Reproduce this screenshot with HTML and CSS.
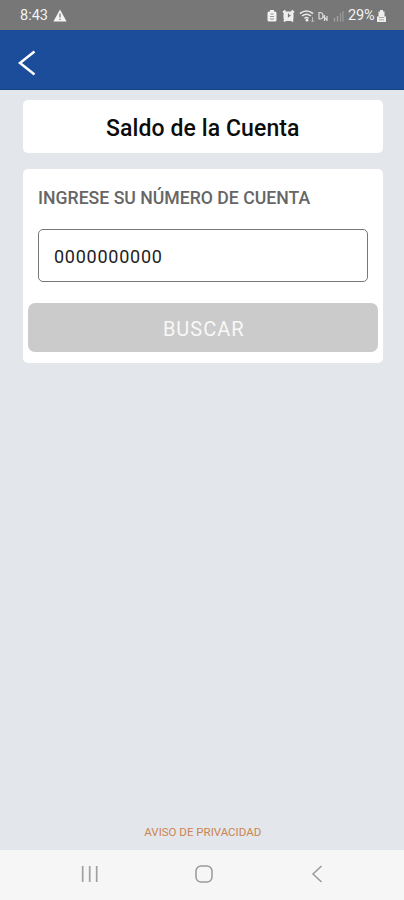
FILE: index.html
```
<!DOCTYPE html>
<html lang="es">
<head>
<meta charset="utf-8">
<title>Saldo de la Cuenta</title>
<link rel="stylesheet" href="styles.css">
</head>
<body>
<div class="status">
  <span class="time">8:43</span>
  <svg class="warning" width="14" height="13" viewBox="0 0 14 13"><path d="M7 .5 13.6 12.5H.4Z" fill="#f4f4f4"/><path d="M7 4.5v4M7 9.8v1.3" stroke="#777" stroke-width="1.3"/></svg>
  <svg class="indicators" width="80" height="16" viewBox="0 0 80 16">
    <path d="M4 2h4v1.500h1q1.500 0 1.500 1.500v7q0 1.500-1.500 1.500H3Q1.500 13.500 1.500 12V5q0-1.500 1.500-1.500h1Z" fill="#f1f1f1"/>
    <path d="M4.500 6h3M4 8.500h4M4 11h4" stroke="#999"/>
    <path d="m17 4.500 2.500-2M28 4.500l-2.500-2M18 13.500l1.500-1.500M27 13.500 25.500 12" stroke="#eee" stroke-width="2"/>
    <rect x="17.500" y="3.500" width="10" height="9.500" rx="3" fill="#eee"/>
    <path d="M22.500 5.500v3l2-1.500" fill="none" stroke="#777" stroke-width="1.200"/>
    <path d="M34 5.500q6.500-5 13 0M36 8q4.500-3.600 9 0M38.500 10.300q2-1.500 4 0" fill="none" stroke="#e9e9e9" stroke-width="1.600"/>
    <circle cx="41" cy="12.200" r="1.400" fill="#eee"/>
    <path d="M46.500 9v5M45 12.500l1.500 1.500 1.500-1.500" fill="none" stroke="#bbb"/>
    <path d="M53 4.500V11h1q3 0 3-3.200T54 4.500ZM58.500 7v6M61 8v5M57.500 8.500 61 12" fill="none" stroke="#ddd" stroke-width="1.200"/>
    <path d="M68.500 10v3.500M71.500 8v5.500" stroke="#a5a5a5" stroke-width="1.300"/>
    <path d="M74.500 5v8.500M77 3v10.500" stroke="#999" stroke-width="1.300"/>
  </svg>
  <span class="percent">29%</span>
  <svg class="battery" width="9" height="14" viewBox="0 0 9 14"><path d="M3 1h3v1.500h1.500v5H9v5.500H0V7.500h1.500v-5H3Z" fill="#ededed"/><path d="M2 8.500h5M2 10.800h5" stroke="#aaa"/></svg>
</div>
<header class="bar">
  <svg width="18" height="26" viewBox="0 0 18 26"><path d="M16.500 1.500 2 13l14.500 11.500" fill="none" stroke="#fff" stroke-width="2.500"/></svg>
</header>
<main>
  <h1 class="card"><span>Saldo de la Cuenta</span></h1>
  <form class="card form">
    <label for="account">INGRESE SU NÚMERO DE CUENTA</label>
    <input id="account" type="text" value="0000000000">
    <button type="button">BUSCAR</button>
  </form>
  <a class="privacy">AVISO DE PRIVACIDAD</a>
</main>
<nav>
  <svg width="18" height="18" viewBox="0 0 18 18"><path d="M1.700 1v16M8.700 1v16M15.700 1v16" stroke="#a0a0a0" stroke-width="1.700"/></svg>
  <svg class="home" width="18" height="18" viewBox="0 0 18 18"><rect x="1" y="1" width="16" height="16" rx="5" fill="none" stroke="#999" stroke-width="1.500"/></svg>
  <svg width="12" height="18" viewBox="0 0 12 18"><path d="M10.500 1 2 9l8.500 8" fill="none" stroke="#999" stroke-width="1.500"/></svg>
</nav>
</body>
</html>
```
FILE: styles.css
```
* { box-sizing: border-box; }
body {
  margin: 0;
  height: 900px;
  display: flex;
  flex-direction: column;
  background: #e3e7eb;
  font-family: Roboto, sans-serif;
}
svg { display: block; flex: none; }
.status {
  height: 30px;
  flex: none;
  display: flex;
  align-items: center;
  padding: 1px 18px 0 20px;
  background: #777;
  color: #f2f2f2;
  font-size: 14.500px;
}
.time { width: 28px; }
.warning { margin-left: 5px; }
.indicators { margin-left: auto; }
.percent { width: 27px; margin-left: 2px; letter-spacing: -.2px; white-space: nowrap; }
.battery { margin-left: 2px; }
.bar {
  height: 60px;
  flex: none;
  display: flex;
  align-items: center;
  padding: 6px 0 0 18px;
  background: #1b4d9a;
  border-bottom: 1px solid #134688;
}
main {
  flex: 1;
  display: flex;
  flex-direction: column;
  padding: 10px 21px 11px 22.500px;
}
.card { background: #fff; border-radius: 5px; }
h1 {
  height: 53px;
  margin: 0 0 16px;
  display: flex;
  align-items: center;
  justify-content: center;
  padding-top: 4px;
  color: #0c0c0c;
  font-size: 23px;
  font-weight: 500;
  letter-spacing: .1px;
}
.form {
  height: 194px;
  display: flex;
  flex-direction: column;
  padding: 17px 5.500px 0;
}
label {
  height: 24px;
  margin: 0 10px 19px;
  line-height: 24px;
  color: #666;
  font-size: 17.650px;
  font-weight: 500;
  white-space: nowrap;
}
input {
  height: 53px;
  margin: 0 10px 21px;
  padding: 1px 15px 0;
  border: 1px solid #777;
  border-radius: 5px;
  background: #fff;
  color: #222;
  font: 400 18px Roboto, sans-serif;
  letter-spacing: .75px;
}
button {
  height: 49px;
  padding: 2px 0 0 2px;
  border: 0;
  border-radius: 7px;
  background: #cbcbcb;
  color: #f8f8f8;
  font: 400 20px Roboto, sans-serif;
  letter-spacing: 1px;
}
.privacy {
  margin-top: auto;
  align-self: center;
  color: #cb8352;
  font-size: 11.500px;
  line-height: 14px;
}
nav {
  height: 50px;
  flex: none;
  display: flex;
  align-items: center;
  justify-content: space-between;
  padding: 0 81px 2px 81px;
  background: #f6f6f6;
}
.home { margin-right: 3px; }
```
